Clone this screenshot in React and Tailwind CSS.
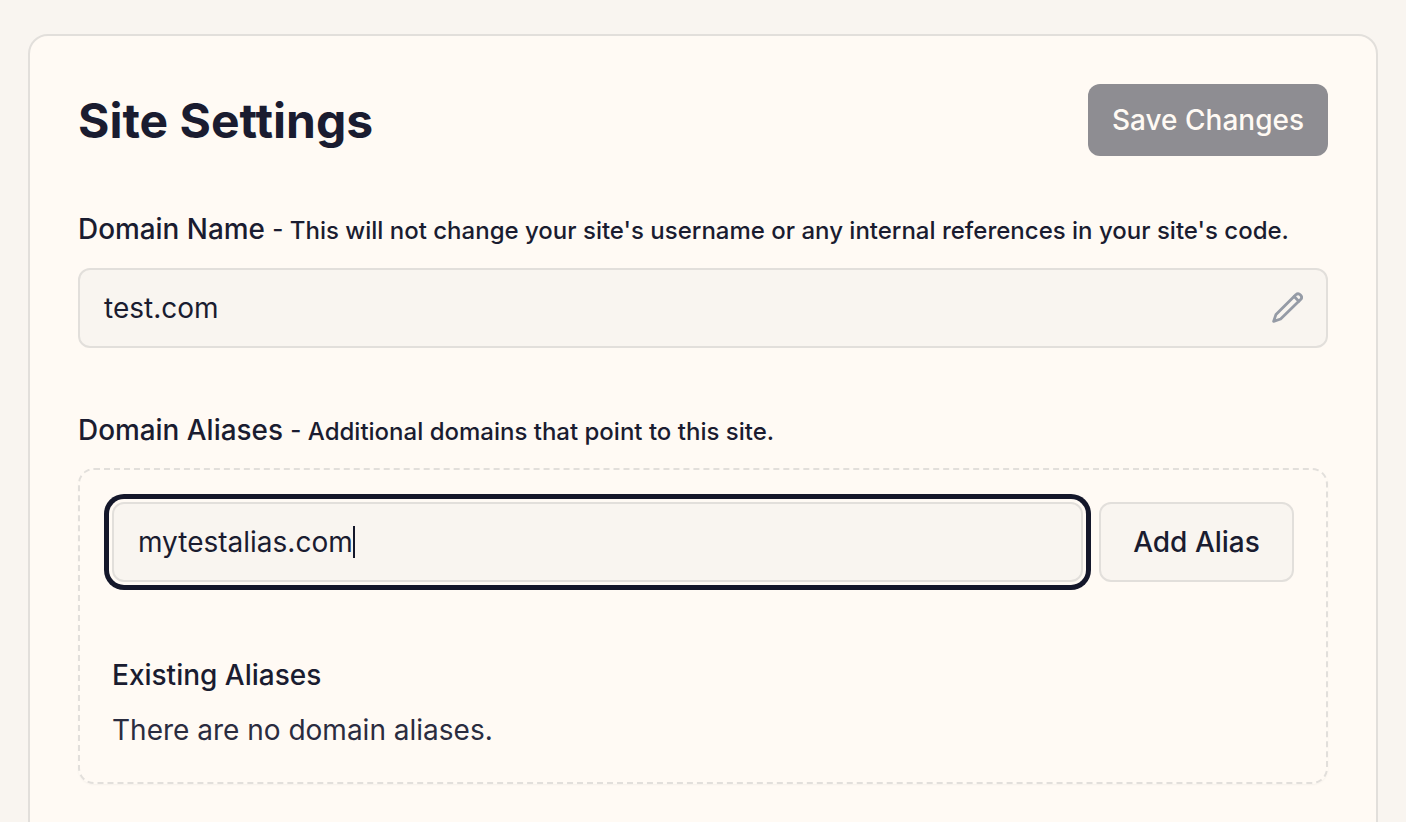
import React from 'react';

function PencilIcon() {
  return (
    <svg viewBox="0 0 32 32" fill="none" stroke="#959ba6" strokeWidth="2.8" strokeLinejoin="round" strokeLinecap="round" className="h-[32px] w-[32px]">
      <path d="M24.8 2.8a3.4 3.4 0 0 1 4.8 4.8L9.6 27l-7 2.4 2.4-7L24.8 2.8Z" />
      <path d="M23.2 4.6l4.6 4.6" />
    </svg>
  );
}

export default function App() {
  return (
    <div className="h-[822px] overflow-hidden bg-[#f9f5f0] px-[28px] pt-[34px] font-['Inter',sans-serif] text-[#1a1c30]">
      <div className="h-[900px] rounded-[20px] border-2 border-[#e2dfdb] bg-[#fffaf4] p-[48px]">
        <div className="flex items-center justify-between">
          <h1 className="pt-[2px] text-[48px] font-bold leading-[70px]">Site Settings</h1>
          <button className="h-[72px] w-[240px] rounded-[12px] bg-[#8e8d92] text-[28px] font-[450] text-[#fffaf4]">
            Save Changes
          </button>
        </div>

        <p className="mt-[52px] text-[27.9px] font-[450] leading-[42px]">
          Domain Name <span className="text-[24px] font-medium">- This will not change your site's username or any internal references in your site's code.</span>
        </p>
        <div className="mt-[16px] flex h-[80px] items-center justify-between rounded-[12px] border-2 border-[#e2dfdb] bg-[#f9f5f0] pl-[24px] pr-[23px] text-[28px]">
          <span>test.com</span>
          <PencilIcon />
        </div>

        <p className="mt-[61px] text-[27.9px] font-[450] leading-[42px]">
          Domain Aliases <span className="text-[24px] font-medium">- Additional domains that point to this site.</span>
        </p>
        <div className="mt-[15px] h-[316px] rounded-[16px] border-2 border-dashed border-[#e2dfdb] p-[32px] shadow-[0_1px_2px_rgba(0,0,0,0.04)]">
          <div className="flex gap-[16px]">
            <div className="flex h-[80px] flex-1 items-center rounded-[12px] border-2 border-[#e2dfdb] bg-[#f9f5f0] pl-[24px] text-[28px] ring-[5px] ring-[#14172a] ring-offset-[3px] ring-offset-[#fffaf4]">
              <span>mytestalias.com</span>
              <span className="h-[32px] w-[2px] bg-[#14172a]" />
            </div>
            <button className="h-[80px] w-[195px] rounded-[12px] border-2 border-[#e2dfdb] bg-[#f9f5f0] text-[28px] font-medium">
              Add Alias
            </button>
          </div>
          <h2 className="mt-[72px] text-[28px] font-[450] leading-[42px]">Existing Aliases</h2>
          <p className="mt-[13px] text-[28px] leading-[42px] text-[#2a2c3f]">There are no domain aliases.</p>
        </div>
      </div>
    </div>
  );
}
